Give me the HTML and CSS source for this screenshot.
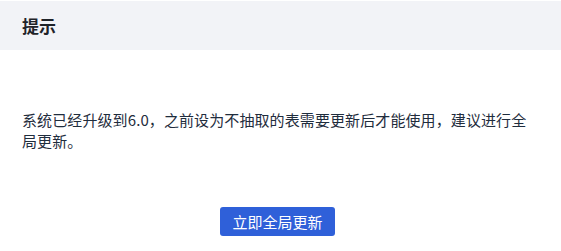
FILE: index.html
```html
<!DOCTYPE html>
<html lang="zh-CN">
<head>
    <meta charset="UTF-8">
    <meta name="viewport" content="width=device-width, initial-scale=1.0">
    <title>提示</title>
    <link rel="stylesheet" href="styles.css">
</head>
<body>
    <div class="dialog">
        <div class="dialog-header">
            <h1>提示</h1>
        </div>
        <div class="dialog-body">
            <p>系统已经升级到6.0，之前设为不抽取的表需要更新后才能使用，建议进行全局更新。</p>
        </div>
        <div class="dialog-footer">
            <button type="button">立即全局更新</button>
        </div>
    </div>
</body>
</html>
```

FILE: styles.css
```css
/* Styles de base */
body {
    font-family: "Noto Sans CJK SC", "Noto Sans", sans-serif;
    background-color: white;
    margin: 0;
    padding: 0;
}

.dialog {
    padding-top: 1px;
}

.dialog-header {
    background-color: #f2f3f7;
    height: 49px;
    display: flex;
    align-items: center;
    padding: 0 22px;
}

h1 {
    margin: 0;
    font-size: 17px;
    font-weight: bold;
    color: #1f2329;
}

.dialog-body {
    padding: 59px 34px 0 22px;
}

.dialog-body p {
    margin: 0;
    font-size: 15px;
    line-height: 21px;
    letter-spacing: 0.1px;
    color: #1f2d3d;
}

.dialog-footer {
    display: flex;
    justify-content: center;
    padding: 56px 6px 0 0;
}

button {
    height: 29px;
    padding: 0 12px;
    background-color: #2f60d9;
    color: white;
    border: none;
    border-radius: 3px;
    font-family: inherit;
    font-size: 15px;
    cursor: pointer;
}
```
